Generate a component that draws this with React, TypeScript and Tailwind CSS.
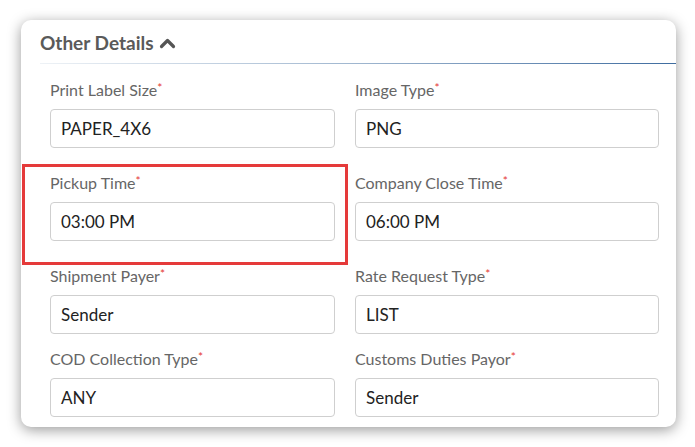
import React from "react";

type Field = { label: string; value: string };

const rows: { left: Field; right: Field; mt: string }[] = [
  { left: { label: "Print Label Size", value: "PAPER_4X6" }, right: { label: "Image Type", value: "PNG" }, mt: "mt-[16px]" },
  { left: { label: "Pickup Time", value: "03:00 PM" }, right: { label: "Company Close Time", value: "06:00 PM" }, mt: "mt-[25px]" },
  { left: { label: "Shipment Payer", value: "Sender" }, right: { label: "Rate Request Type", value: "LIST" }, mt: "mt-[25px]" },
  { left: { label: "COD Collection Type", value: "ANY" }, right: { label: "Customs Duties Payor", value: "Sender" }, mt: "mt-[15px]" },
];

const FieldBox = ({ field, width }: { field: Field; width: string }) => (
  <div className={width}>
    <label className="block h-[20px] text-[16px] leading-[20px] text-[#666]">
      {field.label}
      <span className="text-[#e53935] text-[12px] align-top relative top-[-2px]">*</span>
    </label>
    <div className="mt-[9px] h-[39px] rounded-[4px] border border-[#cfcfcf] bg-white pl-[10px] flex items-center text-[17px] text-[#222]">
      {field.value}
    </div>
  </div>
);

export default function App() {
  return (
    <div className="w-[695px] h-[447px] bg-white pt-[20px] pl-[21px]" style={{ fontFamily: "Lato, 'Open Sans', sans-serif" }}>
      <div className="relative w-[655px] h-[407px] rounded-[10px] bg-white shadow-[0_3px_14px_rgba(0,0,0,0.4)]">
        {/* header */}
        <div className="pt-[11px] pl-[19px] flex items-center h-[35px]">
          <h3 className="text-[19px] font-bold text-[#5a5a5a] leading-[24px]">Other Details</h3>
          <svg className="ml-[5px] mt-[-1px]" width="17" height="12" viewBox="0 0 17 12">
            <polyline points="2.5,9.5 8.5,3.5 14.5,9.5" fill="none" stroke="#555" strokeWidth="3.2" strokeLinecap="round" strokeLinejoin="round" />
          </svg>
        </div>
        <div className="ml-[19px] mt-[8px] h-[1px] bg-gradient-to-r from-[#eef2f6] via-[#9fb6cf] to-[#3e6c9f]" />

        {/* fields */}
        {rows.map((row, i) => (
          <div key={i} className={`flex pl-[29px] ${row.mt}`}>
            <FieldBox field={row.left} width="w-[285px]" />
            <div className="w-[20px]" />
            <FieldBox field={row.right} width="w-[304px]" />
          </div>
        ))}

        {/* highlight annotation */}
        <div className="absolute left-[1px] top-[144px] w-[326px] h-[101px] border-[3px] border-[#e53a3a]" />
      </div>
    </div>
  );
}
